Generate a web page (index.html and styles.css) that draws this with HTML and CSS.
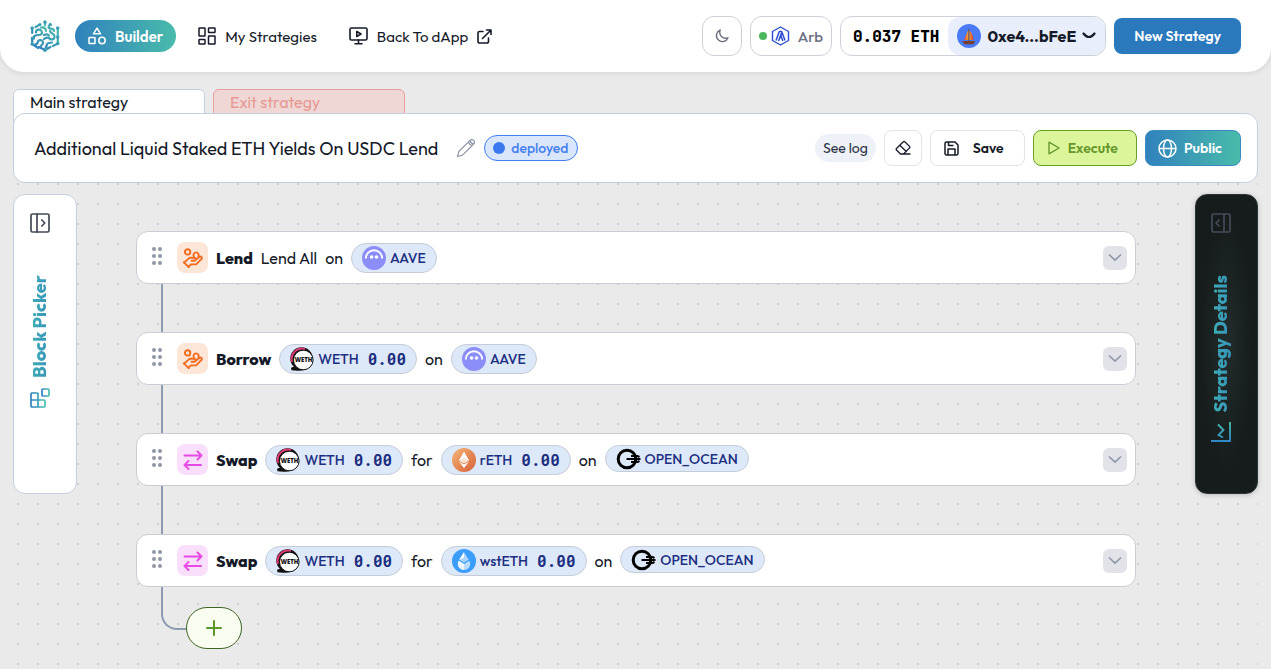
FILE: index.html
```html
<!DOCTYPE html>
<html lang="en">
<head>
    <meta charset="UTF-8">
    <meta name="viewport" content="width=device-width, initial-scale=1.0">
    <title>Strategy Builder</title>
    <link rel="stylesheet" href="styles.css">
</head>
<body>
    <!-- shared gradients -->
    <svg class="sprite" width="0" height="0" aria-hidden="true">
        <defs>
            <linearGradient id="brand" x1="0" y1="1" x2="1" y2="0">
                <stop offset="0.1" stop-color="#3182bd"/>
                <stop offset="0.9" stop-color="#49bbab"/>
            </linearGradient>
            <linearGradient id="picker" x1="0" y1="0" x2="1" y2="0">
                <stop offset="0" stop-color="#2f80c0"/>
                <stop offset="1" stop-color="#4ac0ae"/>
            </linearGradient>
            <linearGradient id="chart" gradientUnits="userSpaceOnUse" x1="0" y1="20" x2="0" y2="0">
                <stop offset="0" stop-color="#2f86c8"/>
                <stop offset="1" stop-color="#4ac0ae"/>
            </linearGradient>
            <linearGradient id="reth" x1="0" y1="0" x2="1" y2="1">
                <stop offset="0" stop-color="#f6b877"/>
                <stop offset="0.5" stop-color="#e58a56"/>
                <stop offset="1" stop-color="#d9603b"/>
            </linearGradient>
            <linearGradient id="sail" x1="0" y1="0" x2="1" y2="0">
                <stop offset="0" stop-color="#e2452c"/>
                <stop offset="0.5" stop-color="#f9b233"/>
                <stop offset="1" stop-color="#d93a2b"/>
            </linearGradient>
        </defs>
    </svg>
    <!-- shared icons -->
    <svg class="symbols" aria-hidden="true">
        <symbol id="i-grip" viewBox="0 0 10 18">
            <g fill="#8f96a5">
                <circle cx="2" cy="2" r="2"/><circle cx="8" cy="2" r="2"/>
                <circle cx="2" cy="9" r="2"/><circle cx="8" cy="9" r="2"/>
                <circle cx="2" cy="16" r="2"/><circle cx="8" cy="16" r="2"/>
            </g>
        </symbol>
        <symbol id="i-hand" viewBox="0 0 20 20">
            <g fill="none" stroke="#f36c1f" stroke-width="1.900" stroke-linejoin="round" stroke-linecap="round">
                <circle cx="4.600" cy="3.900" r="2.700"/>
                <path d="M10.800 8.200a2.600 2.600 0 1 1 4.600 0"/>
                <path d="M1.200 14.500L5.600 10.600a3 3 0 0 1 2-.8h3.600a1.400 1.400 0 0 1 1.200 2.200 1.600 1.600 0 0 1-1.200.8H8.600M11.800 12.600l4.800-3.900a1.500 1.500 0 0 1 2 2.100l-5 5a2 2 0 0 1-1.400.6H8l-2 1.600"/>
                <path d="M1 14.300l4.800 5"/>
            </g>
        </symbol>
        <symbol id="i-swap" viewBox="0 0 20 20">
            <g fill="none" stroke="#e64be6" stroke-width="1.900" stroke-linejoin="round" stroke-linecap="round">
                <path d="M1.500 5.500h17M14.500 1.500l4 4-4 4M18 15H1.500M5.500 11l-4 4 4 4"/>
            </g>
        </symbol>
        <symbol id="i-aave" viewBox="0 0 24 24">
            <circle cx="12" cy="12" r="12" fill="#8b8df8"/>
            <path d="M3.800 12.500a8.200 8.300 0 0 1 16.400 0" fill="none" stroke="#fff" stroke-width="1.900"/>
            <circle cx="9.600" cy="11" r="1.800" fill="#fff"/>
            <circle cx="14.500" cy="11" r="1.800" fill="#fff"/>
        </symbol>
        <symbol id="i-weth" viewBox="0 0 24 24">
            <circle cx="11.500" cy="11.500" r="11.200" fill="#111"/>
            <path d="M2 15A10.500 10.500 0 0 1 15 2" fill="none" stroke="#dc3a72" stroke-width="2"/>
            <path d="M1 21c3-2 7-2 10 0l5 1.500c-4 1.500-10 1.500-14.500.8z" fill="#111"/>
            <circle cx="13.300" cy="13" r="9.800" fill="#fff" stroke="#111" stroke-width="1"/>
            <text x="13.500" y="15.300" text-anchor="middle" class="weth-mark">WETH</text>
        </symbol>
        <symbol id="i-reth" viewBox="0 0 24 24">
            <circle cx="12" cy="12" r="12" fill="url(#reth)"/>
            <path d="M12 3.800l5 8.400-5 3-5-3z" fill="#fff"/>
            <path d="M12 9.800l5 2.400-5 3-5-3z" fill="#fbe3d4"/>
            <path d="M7 13.500l5 3 5-3-5 6.500z" fill="#fff"/>
        </symbol>
        <symbol id="i-wsteth" viewBox="0 0 24 24">
            <circle cx="12" cy="12" r="12" fill="#3a9cfb"/>
            <path d="M12 3.300l4.800 7.500L12 13.600l-4.800-2.800z" fill="#a9d5ff"/>
            <path d="M12 3.300v5.300l-4.800 2.200z" fill="#fff"/>
            <path d="M6.600 11.800l5.400 3.200 5.400-3.200a6.200 6.200 0 1 1-10.800 0z" fill="#b9dcff"/>
            <path d="M6.600 11.800l5.400 3.200v5.900a6.200 6.200 0 0 1-5.400-9.100z" fill="#eef7ff"/>
        </symbol>
        <symbol id="i-ocean" viewBox="0 0 25 22">
            <circle cx="11" cy="11" r="8.800" fill="none" stroke="#000" stroke-width="3"/>
            <path d="M10.500 11H24.500M15 8h6.500l2 1M15 14h6.500l2-1" stroke="#000" stroke-width="2" fill="none"/>
        </symbol>
        <symbol id="i-chevron" viewBox="0 0 14 8">
            <path d="M1.500 1l5.500 5.200L12.500 1" fill="none" stroke="#8f98a8" stroke-width="1.700" stroke-linecap="round" stroke-linejoin="round"/>
        </symbol>
    </svg>

    <header class="topbar">
        <a class="logo" href="#" aria-label="Home">
            <svg width="30" height="32" viewBox="0 0 30 32">
                <g fill="none" stroke="url(#brand)" stroke-width="2.200" stroke-linecap="round" stroke-linejoin="round">
                    <path d="M15 2v3.500M10 4.500L5.500 7M2.200 8v5M6 12.500c0-3 4-4 5.500-1.500s-.5 4-3 4S3 16 4 18.500M11 7.500c3-.5 5 1 5 3.500M2.200 18v6M5 24.500c1.500 0 2.500-1 2.800-2.500.5-2.500 5-2.500 5.200.5.200 2-1.500 2.500-2.500 4M2.200 24l6 4"/>
                    <path d="M20 4l-1.500 3.500c2 2.500 5.500 0 5.500 3.500M27.800 8v9M20 11c.5 3 4.500 2 4.500 5.500s-3 3.500-5 2-4-1-5.500.5M14 15c2-1 4-.5 5 .5M27.800 17v6.500L23 26M22 22.500c-2.500.5-4.500 0-5 2L15 30l5.500-3M15 30l-6-3"/>
                </g>
                <g fill="url(#brand)">
                    <circle cx="15" cy="2" r="1.800"/><circle cx="10" cy="4.500" r="1.500"/><circle cx="2.200" cy="8" r="1.800"/>
                    <circle cx="20.500" cy="4.500" r="1.500"/><circle cx="27.800" cy="8" r="1.800"/><circle cx="27.800" cy="17" r="1.700"/>
                    <circle cx="27.800" cy="23.500" r="1.800"/><circle cx="2.200" cy="24" r="1.800"/><circle cx="2.200" cy="18" r="1.500"/>
                    <circle cx="15" cy="30" r="1.900"/>
                </g>
            </svg>
        </a>
        <nav class="nav">
            <a class="nav-link active" href="#">
                <svg width="18" height="18" viewBox="0 0 18 18" fill="none" stroke="currentColor" stroke-width="1.500" stroke-linejoin="round">
                    <path d="M9 1.200l3.600 5.600H5.400z"/><rect x="1" y="10.500" width="6" height="6" rx="0.500"/><circle cx="14" cy="13.500" r="3.200"/>
                </svg>
                Builder
            </a>
            <a class="nav-link" href="#">
                <svg width="18" height="18" viewBox="0 0 18 18" fill="none" stroke="currentColor" stroke-width="1.500" stroke-linejoin="round">
                    <rect x="1" y="1" width="6" height="8" rx="0.500"/><rect x="10.500" y="1" width="6.500" height="4.500" rx="0.500"/>
                    <rect x="1" y="12.500" width="6" height="4.500" rx="0.500"/><rect x="10.500" y="9" width="6.500" height="8" rx="0.500"/>
                </svg>
                My Strategies
            </a>
            <a class="nav-link" href="#">
                <svg width="19" height="18" viewBox="0 0 19 18" fill="none" stroke="currentColor" stroke-width="1.600" stroke-linejoin="round" stroke-linecap="round">
                    <rect x="1" y="1" width="17" height="12" rx="1.500"/><path d="M7.800 4.500v5l4.200-2.500zM9.500 13v3.500M6 16.700h7"/>
                </svg>
                Back To dApp
                <svg width="15" height="15" viewBox="0 0 15 15" fill="none" stroke="currentColor" stroke-width="1.600" stroke-linejoin="round" stroke-linecap="round">
                    <path d="M6 2.500H2.500A1.500 1.500 0 0 0 1 4v8.500A1.500 1.500 0 0 0 2.500 14H10a1.500 1.500 0 0 0 1.500-1.500V9M9.500 1H14v4.500M14 1L5.500 9.500"/>
                </svg>
            </a>
        </nav>
        <div class="account">
            <button class="box-btn theme" type="button" aria-label="Toggle theme">
                <svg width="14" height="14" viewBox="0 0 14 14" fill="none" stroke="currentColor" stroke-width="1.400" stroke-linejoin="round">
                    <path d="M5.200 1A6 6 0 1 0 13 8.800 6 6 0 0 1 5.200 1z"/>
                </svg>
            </button>
            <button class="box-btn network" type="button">
                <span class="online"></span>
                <svg width="19" height="20" viewBox="0 0 19 20" fill="none" stroke="#2a4bd0" stroke-linejoin="round">
                    <path d="M9.500 1l8 4.500v9l-8 4.500-8-4.500v-9z" stroke-width="1.400"/>
                    <path d="M5 14.500L8.300 5.500h2.400l3.300 9M7.500 15l3-8M9.800 9.500l2 5.500" stroke-width="1.500"/>
                </svg>
                <span class="network-name">Arb</span>
            </button>
            <div class="wallet">
                <span class="balance">0.037 ETH</span>
                <button class="address" type="button">
                    <svg width="24" height="24" viewBox="0 0 24 24">
                        <circle cx="12" cy="12" r="12" fill="#4a7bf7"/>
                        <path d="M11.500 5.500L7 16h4.500zM12.300 6.500c2.500 2 4.200 6 4 9.500h-4z" fill="url(#sail)"/>
                        <path d="M11.900 5v13" stroke="#6b3a22" stroke-width="0.800"/>
                        <path d="M5.300 17h13l-2 3.300H7.500z" fill="#7a3f2a"/>
                    </svg>
                    0xe4...bFeE
                    <svg width="14" height="8" viewBox="0 0 14 8" fill="none" stroke="currentColor" stroke-width="2.200" stroke-linecap="round">
                        <path d="M1.500 1.500q5.500 7 11 0"/>
                    </svg>
                </button>
            </div>
            <button class="new-strategy" type="button">New Strategy</button>
        </div>
    </header>

    <main class="page">
        <div class="tabs" role="tablist">
            <button class="tab" type="button" role="tab" aria-selected="true">Main strategy</button>
            <button class="tab exit" type="button" role="tab" aria-selected="false">Exit strategy</button>
        </div>

        <section class="toolbar">
            <h1>Additional Liquid Staked ETH Yields On USDC Lend</h1>
            <button class="edit" type="button" aria-label="Edit name">
                <svg width="20" height="20" viewBox="0 0 20 20" fill="none" stroke="#8d96a8" stroke-width="1.200" stroke-linejoin="round">
                    <path d="M1.500 18.500l1.300-5L14 2.300a2.500 2.500 0 0 1 3.700 3.700L6.500 17.200zM12.500 3.800q.6 3 3.700 3.700M14 2.300q.5 3.200 3.700 3.700"/>
                </svg>
            </button>
            <span class="status"><span class="status-dot"></span>deployed</span>
            <div class="actions">
                <a class="see-log" href="#">See log</a>
                <button class="action erase" type="button" aria-label="Clear">
                    <svg width="16" height="16" viewBox="0 0 16 16" fill="none" stroke="currentColor" stroke-width="1.300" stroke-linejoin="round" stroke-linecap="round">
                        <path d="M5.500 14L1.500 10a1 1 0 0 1 0-1.500l6.800-6.800a1 1 0 0 1 1.500 0l4.700 4.700a1 1 0 0 1 0 1.500L8.500 14M4.800 5.300l6.500 6.200M5.500 14H15"/>
                    </svg>
                </button>
                <button class="action save" type="button">
                    <svg width="15" height="15" viewBox="0 0 15 15" fill="none" stroke="currentColor" stroke-width="1.500" stroke-linejoin="round">
                        <path d="M1 2.500A1.500 1.500 0 0 1 2.500 1H11l3 3v8.500a1.500 1.500 0 0 1-1.500 1.500h-10A1.500 1.500 0 0 1 1 12.500zM4.500 1v3.500h5M4 14V8h7v6"/>
                    </svg>
                    <span>Save</span>
                </button>
                <button class="action execute" type="button">
                    <svg width="12" height="14" viewBox="0 0 12 14" fill="none" stroke="currentColor" stroke-width="1.400" stroke-linejoin="round">
                        <path d="M1 1.200v11.600L11 7z"/>
                    </svg>
                    Execute
                </button>
                <button class="action public" type="button">
                    <svg width="19" height="19" viewBox="0 0 19 19" fill="none" stroke="currentColor" stroke-width="1.500">
                        <circle cx="9.500" cy="9.500" r="8.500"/><ellipse cx="9.500" cy="9.500" rx="4" ry="8.500"/><path d="M1 9.500h17"/>
                    </svg>
                    Public
                </button>
            </div>
        </section>

        <section class="workspace">
            <aside class="panel picker">
                <button class="panel-toggle" type="button" aria-label="Open block picker">
                    <svg width="20" height="20" viewBox="0 0 20 20" fill="none" stroke="currentColor" stroke-width="1.700" stroke-linejoin="round" stroke-linecap="round">
                        <rect x="1" y="1" width="18" height="18" rx="1.500"/><path d="M7 1v18M11.800 7l3 3-3 3"/>
                    </svg>
                </button>
                <span class="panel-label">Block Picker</span>
                <svg width="20" height="20" viewBox="0 0 20 20" fill="none" stroke="url(#picker)" stroke-width="1.700" stroke-linejoin="round">
                    <rect x="12" y="1" width="7" height="7" rx="1"/><path d="M8 5H2a1 1 0 0 0-1 1v12a1 1 0 0 0 1 1h12a1 1 0 0 0 1-1v-5a1 1 0 0 0-1-1H1M8 5v14"/>
                </svg>
            </aside>

            <div class="flow">
                <article class="block">
                    <svg class="grip" width="10" height="18"><use href="#i-grip"/></svg>
                    <span class="kind"><svg width="20" height="20"><use href="#i-hand"/></svg></span>
                    <strong>Lend</strong>
                    <span>Lend All</span>
                    <span>on</span>
                    <span class="chip"><svg width="24" height="24"><use href="#i-aave"/></svg>AAVE</span>
                    <button class="expand" type="button" aria-label="Expand"><svg width="14" height="8"><use href="#i-chevron"/></svg></button>
                </article>
                <div class="link"></div>
                <article class="block">
                    <svg class="grip" width="10" height="18"><use href="#i-grip"/></svg>
                    <span class="kind"><svg width="20" height="20"><use href="#i-hand"/></svg></span>
                    <strong>Borrow</strong>
                    <span class="chip"><svg width="24" height="24"><use href="#i-weth"/></svg>WETH <b>0.00</b></span>
                    <span>on</span>
                    <span class="chip"><svg width="24" height="24"><use href="#i-aave"/></svg>AAVE</span>
                    <button class="expand" type="button" aria-label="Expand"><svg width="14" height="8"><use href="#i-chevron"/></svg></button>
                </article>
                <div class="link"></div>
                <article class="block">
                    <svg class="grip" width="10" height="18"><use href="#i-grip"/></svg>
                    <span class="kind swap"><svg width="20" height="20"><use href="#i-swap"/></svg></span>
                    <strong>Swap</strong>
                    <span class="chip"><svg width="24" height="24"><use href="#i-weth"/></svg>WETH <b>0.00</b></span>
                    <span>for</span>
                    <span class="chip"><svg width="24" height="24"><use href="#i-reth"/></svg>rETH <b>0.00</b></span>
                    <span>on</span>
                    <span class="chip venue"><svg width="25" height="22"><use href="#i-ocean"/></svg>OPEN_OCEAN</span>
                    <button class="expand" type="button" aria-label="Expand"><svg width="14" height="8"><use href="#i-chevron"/></svg></button>
                </article>
                <div class="link"></div>
                <article class="block">
                    <svg class="grip" width="10" height="18"><use href="#i-grip"/></svg>
                    <span class="kind swap"><svg width="20" height="20"><use href="#i-swap"/></svg></span>
                    <strong>Swap</strong>
                    <span class="chip"><svg width="24" height="24"><use href="#i-weth"/></svg>WETH <b>0.00</b></span>
                    <span>for</span>
                    <span class="chip"><svg width="24" height="24"><use href="#i-wsteth"/></svg>wstETH <b>0.00</b></span>
                    <span>on</span>
                    <span class="chip venue"><svg width="25" height="22"><use href="#i-ocean"/></svg>OPEN_OCEAN</span>
                    <button class="expand" type="button" aria-label="Expand"><svg width="14" height="8"><use href="#i-chevron"/></svg></button>
                </article>
                <div class="tail">
                    <div class="elbow"></div>
                    <button class="add" type="button" aria-label="Add block">
                        <svg width="16" height="16" viewBox="0 0 16 16" stroke="#5b962c" stroke-width="2" stroke-linecap="round"><path d="M8 1v14M1 8h14"/></svg>
                    </button>
                </div>
            </div>

            <aside class="panel details">
                <button class="panel-toggle" type="button" aria-label="Open strategy details">
                    <svg width="20" height="20" viewBox="0 0 20 20" fill="none" stroke="currentColor" stroke-width="1.700" stroke-linejoin="round" stroke-linecap="round">
                        <rect x="1" y="1" width="18" height="18" rx="1.500"/><path d="M13 1v18M8 7l-3 3 3 3"/>
                    </svg>
                </button>
                <span class="panel-label">Strategy Details</span>
                <svg width="20" height="20" viewBox="0 0 20 20" fill="none" stroke="url(#chart)" stroke-width="1.800">
                    <path d="M0 19h19V0M12 15.500L7.500 13l5-5L7 2.500"/>
                </svg>
            </aside>
        </section>
    </main>
</body>
</html>
```

FILE: styles.css
```css
* {
    box-sizing: border-box;
}
body {
    margin: 0;
    min-height: 100vh;
    display: flex;
    flex-direction: column;
    background-color: #eaeaea;
    color: #151a28;
    font-family: Outfit, Lato, sans-serif;
    font-size: 16px;
}
button {
    font: inherit;
    color: inherit;
    margin: 0;
    padding: 0;
    border: none;
    background: none;
    cursor: pointer;
}
a {
    color: inherit;
    text-decoration: none;
}
svg {
    display: block;
    flex-shrink: 0;
}
.sprite {
    position: absolute;
}
.symbols {
    display: none;
}
.weth-mark {
    font-family: "Open Sans", sans-serif;
    font-size: 6px;
    font-weight: 800;
    fill: #111;
}

/* header */
.topbar {
    display: flex;
    align-items: center;
    height: 72px;
    padding: 0 30px;
    background-color: white;
    border-radius: 0 0 24px 24px;
    box-shadow: 0 1px 6px rgba(0,0,0,0.1);
}
.nav {
    display: flex;
    align-items: center;
    gap: 12px;
    margin-left: 15px;
}
.nav-link {
    display: flex;
    align-items: center;
    gap: 9px;
    height: 32px;
    padding: 0 10px;
    border-radius: 16px;
    font-size: 15px;
    font-weight: 400;
    white-space: nowrap;
}
.nav-link.active {
    padding: 0 13px;
    color: white;
    font-weight: 600;
    background: linear-gradient(90deg, #3182bd, #49bbab);
}
.account {
    display: flex;
    align-items: center;
    gap: 8px;
    margin-left: auto;
}
.box-btn, .wallet {
    display: flex;
    align-items: center;
    height: 40px;
    border: 1px solid #cdd0d8;
    border-radius: 12px;
    background-color: white;
}
.theme {
    width: 40px;
    justify-content: center;
    color: #6b7080;
}
.network {
    gap: 4px;
    padding: 0 8px;
    color: #6b7080;
    font-size: 15px;
    font-weight: 500;
}
.online {
    width: 8px;
    height: 8px;
    border-radius: 50%;
    background-color: #4cb85c;
}
.network-name {
    margin-left: 4px;
}
.balance {
    padding: 0 9px 0 12px;
    color: black;
    font-family: "JetBrains Mono", "DejaVu Sans Mono", monospace;
    font-weight: 800;
}
.address {
    display: flex;
    align-items: center;
    gap: 6px;
    height: 38px;
    padding: 0 9px;
    border-radius: 12px;
    background-color: #e8eefb;
    font-weight: bold;
}
.new-strategy {
    height: 36px;
    padding: 0 20px;
    border-radius: 8px;
    background-color: #2b79bd;
    color: white;
    font-size: 14px;
    font-weight: 600;
}

/* tabs and toolbar */
.page {
    flex: 1;
    display: flex;
    flex-direction: column;
    padding: 17px 13px 0;
}
.tabs {
    display: flex;
    gap: 8px;
    margin-bottom: -10px;
}
.tab {
    width: 192px;
    height: 34px;
    padding: 0 16px 8px;
    border: 1px solid #c5d0df;
    border-radius: 6px 6px 0 0;
    background-color: white;
    text-align: left;
}
.tab.exit {
    border-color: #e9a09a;
    background-color: #f0d7d6;
    color: #e69a94;
}
.toolbar {
    position: relative;
    display: flex;
    align-items: center;
    min-height: 70px;
    padding: 0 16px 0 20px;
    border: 1px solid #c5d0df;
    border-radius: 12px;
    background-color: white;
}
h1 {
    margin: 0;
    font-size: 18px;
    font-weight: 400;
}
.edit {
    margin: 0 8px 0 18px;
}
.status {
    display: flex;
    align-items: center;
    gap: 6px;
    height: 26px;
    padding: 0 9px 0 8px;
    border: 1px solid #3f7df0;
    border-radius: 13px;
    background-color: #d9e6fb;
    color: #4680f0;
    font-size: 14px;
    font-weight: 500;
}
.status-dot {
    width: 12px;
    height: 12px;
    border-radius: 50%;
    background-color: #3c79ef;
}
.actions {
    display: flex;
    align-items: center;
    gap: 8px;
    margin-left: auto;
}
.see-log {
    padding: 0 8px;
    border-radius: 14px;
    background-color: #eef1f7;
    color: #2d3445;
    font-size: 14px;
    line-height: 28px;
}
.action {
    display: flex;
    align-items: center;
    justify-content: center;
    gap: 8px;
    height: 36px;
    padding: 0 14px;
    border: 1px solid #e2e4e9;
    border-radius: 8px;
    font-size: 14px;
    font-weight: 600;
}
.erase {
    width: 38px;
    padding: 0;
}
.save {
    gap: 14px;
    padding: 0 20px 0 13px;
}
.execute {
    padding: 0 18px 0 14px;
    border-color: #6a9f2a;
    background-color: #dbf59b;
    color: #67972a;
}
.public {
    gap: 7px;
    padding: 0 18px 0 12px;
    border-color: #3a8cc0;
    background: linear-gradient(90deg, #3182bd, #49bbab);
    color: white;
}

/* canvas */
.workspace {
    flex: 1;
    display: flex;
    align-items: flex-start;
    gap: 59px;
    padding-top: 11px;
    background-image: conic-gradient(from 270deg at 2px 2px, #cfcfd0 90deg, transparent 0);
    background-size: 20px 20px;
    background-position: 4px 0;
}
.panel {
    display: flex;
    flex-direction: column;
    width: 64px;
    min-height: 300px;
    padding: 18px 16px;
    border: 1px solid #c5d0df;
    border-radius: 12px;
    background-color: white;
}
.panel-toggle {
    margin-bottom: 42px;
    color: #434957;
}
.panel-label {
    margin-bottom: 10px;
    writing-mode: vertical-rl;
    transform: rotate(180deg);
    background: linear-gradient(90deg, #3182bd, #3fb0b5);
    background-clip: text;
    -webkit-background-clip: text;
    color: transparent;
    font-size: 18px;
    font-weight: 800;
    line-height: 20px;
}
.panel.details {
    width: 63px;
    padding: 18px 15px;
    border-color: #2a3335;
    background: radial-gradient(ellipse at center, #222d2b, #161c1c 60%);
    box-shadow: 0 1px 5px rgba(0,0,0,0.2);
}
.details .panel-toggle {
    color: #454b58;
}
.flow {
    flex: 1;
    padding: 37px 0 20px;
}
.block {
    display: flex;
    align-items: center;
    gap: 8px;
    min-height: 53px;
    padding: 0 8px 0 15px;
    border: 1px solid #cbcdd6;
    border-radius: 12px;
    background-color: white;
}
.block strong {
    font-weight: 800;
}
.grip {
    margin: 0 7px 4px 0;
}
.kind {
    display: flex;
    align-items: center;
    justify-content: center;
    width: 31px;
    height: 31px;
    border-radius: 8px;
    background-color: #fce6d8;
}
.kind.swap {
    background-color: #f9dffb;
}
.chip {
    display: flex;
    align-items: center;
    gap: 4px;
    height: 30px;
    padding: 0 10px;
    border: 1px solid #c5ccd8;
    border-radius: 15px;
    background-color: #dde8f8;
    color: #1c2f80;
    font-size: 14px;
    font-weight: 500;
}
.chip b {
    margin-left: 5px;
    font-family: "Roboto Mono", "DejaVu Sans Mono", monospace;
    font-size: 16px;
}
.chip.venue {
    height: 27px;
    margin-bottom: 2px;
}
.expand {
    display: flex;
    align-items: center;
    justify-content: center;
    width: 24px;
    height: 24px;
    margin-left: auto;
    border-radius: 6px;
    background-color: #e1e3e9;
}
.link {
    width: 2px;
    height: 48px;
    margin-left: 25px;
    background-color: #8d9bb0;
}
.tail {
    display: flex;
    align-items: flex-start;
    padding-left: 25px;
}
.elbow {
    width: 25px;
    height: 43px;
    border-left: 2px solid #8d9bb0;
    border-bottom: 2px solid #8d9bb0;
    border-radius: 0 0 0 16px;
}
.add {
    display: flex;
    align-items: center;
    justify-content: center;
    width: 56px;
    height: 42px;
    margin-top: 20px;
    border: 1px solid #3f6423;
    border-radius: 21px;
    background-color: #f8fdf0;
}
```
